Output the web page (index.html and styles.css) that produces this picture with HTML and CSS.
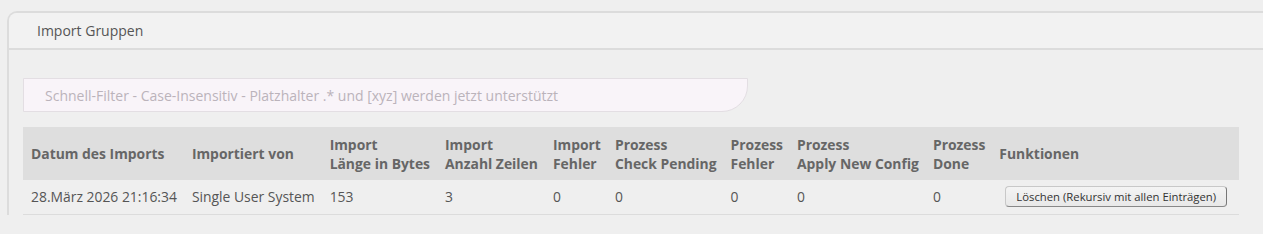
FILE: index.html
```html
<!DOCTYPE html>
<html lang="de">
  <head>
    <meta charset="UTF-8" />
    <title>Import Gruppen</title>
    <link rel="stylesheet" href="styles.css">
  </head>
  <body>
    <div class="panel">
      <div class="panel-head">Import Gruppen</div>
      <div class="panel-body">
        <input class="filter" type="text" placeholder="Schnell-Filter - Case-Insensitiv - Platzhalter .* und [xyz] werden jetzt unterstützt" />
        <table class="imports">
          <thead>
            <tr>
              <th>Datum des Imports</th>
              <th>Importiert von</th>
              <th>Import<br />Länge in Bytes</th>
              <th>Import<br />Anzahl Zeilen</th>
              <th>Import<br />Fehler</th>
              <th>Prozess<br />Check Pending</th>
              <th>Prozess<br />Fehler</th>
              <th>Prozess<br />Apply New Config</th>
              <th>Prozess<br />Done</th>
              <th>Funktionen</th>
            </tr>
          </thead>
          <tbody>
            <tr>
              <td>28.März 2026 21:16:34</td>
              <td>Single User System</td>
              <td>153</td>
              <td>3</td>
              <td>0</td>
              <td>0</td>
              <td>0</td>
              <td>0</td>
              <td>0</td>
              <td><button class="btn">Löschen (Rekursiv mit allen Einträgen)</button></td>
            </tr>
          </tbody>
        </table>
      </div>
    </div>
  </body>
</html>
```

FILE: styles.css
```css
* {
  margin: 0;
  padding: 0;
  box-sizing: border-box;
}
body {
  background: #efefef;
  font-family: "Open Sans", "Liberation Sans", sans-serif;
  font-size: 14px;
  color: #555;
  overflow: hidden;
}
.panel {
  margin: 11px -40px 0 7px;
  border-top: 2px solid #dcdcdc;
  border-left: 2px solid #dcdcdc;
  border-top-left-radius: 10px;
}
.panel-head {
  height: 37px;
  line-height: 35px;
  padding-left: 28px;
  background: #f2f2f2;
  border-bottom: 2px solid #dcdcdc;
  border-top-left-radius: 8px;
  color: #555;
}
.panel-body {
  padding: 28px 14px 0;
}
.filter {
  display: block;
  width: 725px;
  height: 34px;
  padding: 0 21px;
  border: 1px solid #e3dee3;
  border-bottom-right-radius: 26px;
  background: #f9f4f9;
  font-family: inherit;
  font-size: 14px;
  color: #555;
  outline: none;
}
.filter::placeholder {
  color: #bbb3bb;
}
/* table */
.imports {
  margin-top: 15px;
  border-collapse: collapse;
  font-size: 13.9px;
}
.imports th {
  background: #dedede;
  color: #666;
  font-weight: 700;
  text-align: left;
  vertical-align: middle;
  line-height: 19px;
  height: 53px;
  padding: 0 7px 0 8px;
  white-space: nowrap;
}
.imports th:nth-child(n+5) {
  padding-right: 6px;
}
.imports td {
  height: 34px;
  padding: 0 7px 0 8px;
  border-bottom: 1px solid #dcdcdc;
  white-space: nowrap;
  color: #555;
}
.btn {
  margin: 0 5px 0 6px;
  height: 21px;
  padding: 0 10px;
  font-family: inherit;
  font-size: 11.3px;
  color: #333;
  background: linear-gradient(#f4f4f4, #e8e8e8);
  border: 1px solid #c8c8c8;
  border-right-color: #777;
  border-bottom-color: #888;
  border-radius: 4px;
}
```
